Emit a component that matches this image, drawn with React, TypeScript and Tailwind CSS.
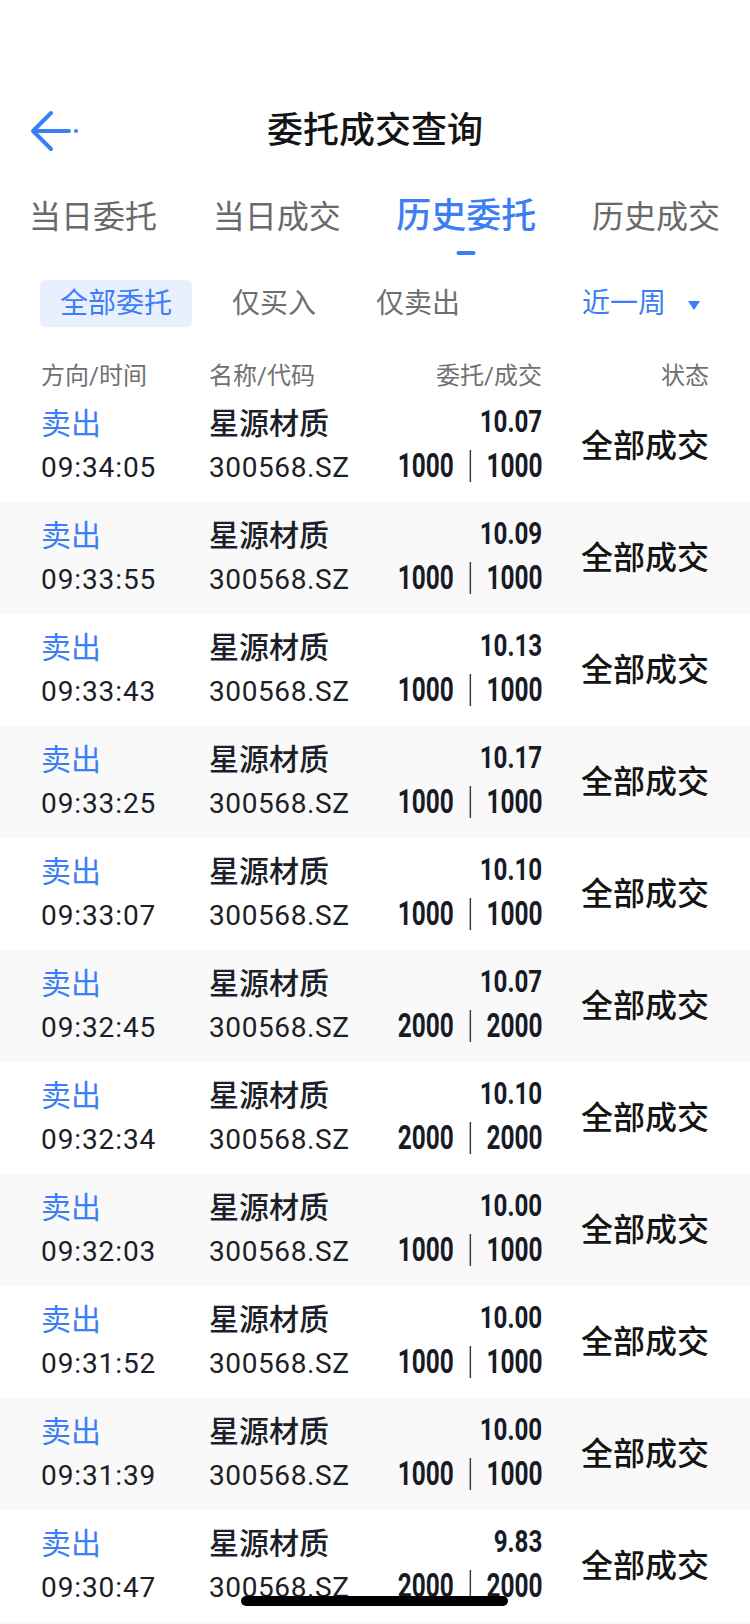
import React from "react";

const rows = [
  { time: "09:34:05", price: "10.07", qty: "1000" },
  { time: "09:33:55", price: "10.09", qty: "1000" },
  { time: "09:33:43", price: "10.13", qty: "1000" },
  { time: "09:33:25", price: "10.17", qty: "1000" },
  { time: "09:33:07", price: "10.10", qty: "1000" },
  { time: "09:32:45", price: "10.07", qty: "2000" },
  { time: "09:32:34", price: "10.10", qty: "2000" },
  { time: "09:32:03", price: "10.00", qty: "1000" },
  { time: "09:31:52", price: "10.00", qty: "1000" },
  { time: "09:31:39", price: "10.00", qty: "1000" },
  { time: "09:30:47", price: "9.83", qty: "2000" },
  { time: "09:30:21", price: "9.85", qty: "1000" },
];

const font = "font-['Roboto','Noto_Sans_CJK_SC',sans-serif]";

function BackArrow() {
  return (
    <svg width="52" height="44" viewBox="0 0 52 44" fill="none">
      <path
        d="M22 4 L4 22 L22 40 M4 22 H40"
        stroke="#3b7ef6"
        strokeWidth="4"
        strokeLinecap="round"
        strokeLinejoin="round"
      />
      <circle cx="47" cy="22" r="2" fill="#3b7ef6" />
    </svg>
  );
}

export default function App() {
  return (
    <div className={`relative h-[1624px] w-[750px] overflow-hidden bg-white ${font}`}>
      {/* nav bar */}
      <div className="relative mt-[88px] flex h-[86px] items-center">
        <div className="absolute left-[29px] top-[21px]">
          <BackArrow />
        </div>
        <div className="w-full text-center text-[36px] font-medium text-[#141414]">
          委托成交查询
        </div>
      </div>

      {/* tabs */}
      <div className="flex h-[86px] items-center justify-between pl-[29px] pr-[30px]">
        <span className="text-[32px] text-[#68696b]">当日委托</span>
        <span className="text-[32px] text-[#68696b]">当日成交</span>
        <span className="relative text-[35px] font-medium text-[#3b7ef6]">
          历史委托
          <span className="absolute left-1/2 top-[60px] h-[4px] w-[19px] -translate-x-1/2 rounded-full bg-[#3b7ef6]" />
        </span>
        <span className="text-[32px] text-[#68696b]">历史成交</span>
      </div>

      {/* filters */}
      <div className="mt-[20px] flex h-[47px] items-center pl-[40px] pr-[50px]">
        <div className="flex gap-[20px]">
          <span className="flex h-[47px] items-center rounded-[6px] bg-[#e8f0fd] px-[20px] text-[28px] text-[#3b7ef6]">
            全部委托
          </span>
          <span className="flex h-[47px] items-center px-[20px] text-[28px] text-[#6e6f71]">
            仅买入
          </span>
          <span className="flex h-[47px] items-center px-[20px] text-[28px] text-[#6e6f71]">
            仅卖出
          </span>
        </div>
        <div className="ml-auto flex items-center gap-[22px] text-[28px] text-[#3b7ef6]">
          <span>近一周</span>
          <span className="mt-[4px] h-0 w-0 border-x-[6px] border-t-[9px] border-x-transparent border-t-[#3b7ef6]" />
        </div>
      </div>

      {/* header */}
      <div className="mt-[24px] grid h-[57px] grid-cols-[168px_1fr_190px_167px] items-start px-[41px] pt-[12px] text-[24px] leading-[26px] text-[#6f7072]">
        <span>方向/时间</span>
        <span>名称/代码</span>
        <span className="text-right">委托/成交</span>
        <span className="text-right">状态</span>
      </div>

      {/* list */}
      <div className="h-[1230px] overflow-hidden">
        <div className="-mt-[18px]">
          {rows.map((r, i) => (
            <div
              key={i}
              className={`grid h-[112px] grid-cols-[168px_1fr_190px_167px] px-[41px] pt-[12px] ${
                i % 2 === 1 ? "bg-[#f9f9f9]" : "bg-white"
              }`}
            >
              <div>
                <div className="h-[44px] text-[30px] leading-[44px] text-[#3b7ef6]">卖出</div>
                <div className="h-[44px] text-[28px] leading-[44px] tracking-[0.9px] text-[#1c2029]">
                  {r.time}
                </div>
              </div>
              <div>
                <div className="h-[44px] text-[30px] font-medium leading-[44px] text-[#1c2029]">星源材质</div>
                <div className="h-[44px] text-[28px] leading-[44px] tracking-[0.6px] text-[#1c2029]">
                  300568.SZ
                </div>
              </div>
              <div className="flex flex-col items-end">
                <div className="-mt-[2px] h-[44px] origin-right scale-x-[0.78] text-[31px] font-bold leading-[44px] text-[#161b26]">
                  {r.price}
                </div>
                <div className="flex h-[44px] origin-right scale-x-[0.74] items-center text-[33px] font-bold leading-[44px] text-[#161b26]">
                  <span>{r.qty}</span>
                  <span className="mx-[21px] h-[32px] w-[2px] bg-[#3a3d44]" />
                  <span>{r.qty}</span>
                </div>
              </div>
              <div className="-mt-[12px] flex items-center justify-end text-[32px] font-medium text-[#141414]">
                全部成交
              </div>
            </div>
          ))}
        </div>
      </div>

      {/* home indicator */}
      <div className="absolute bottom-[18px] left-[241px] h-[10px] w-[267px] rounded-full bg-black" />
    </div>
  );
}
